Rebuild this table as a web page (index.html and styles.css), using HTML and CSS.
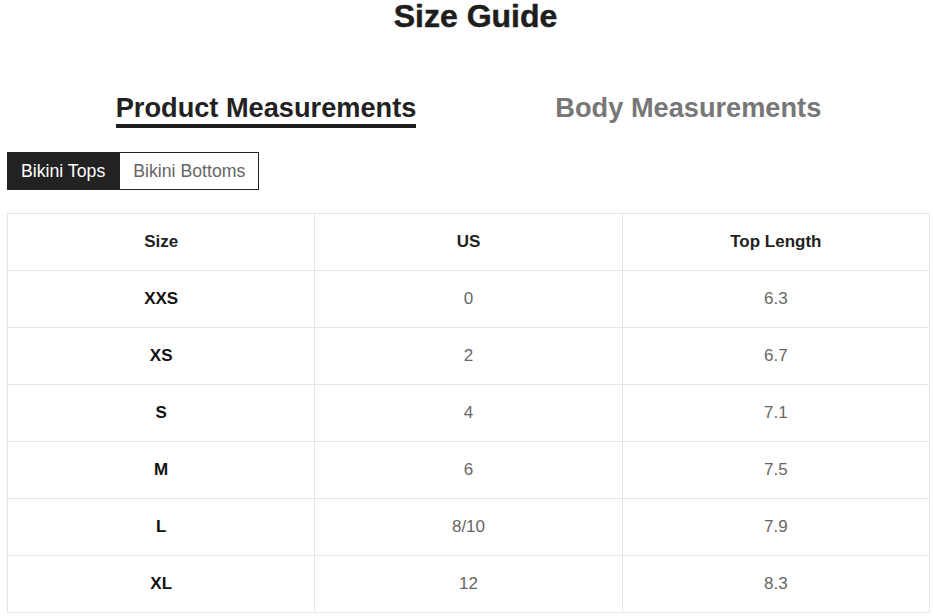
FILE: index.html
```html
<!DOCTYPE html>
<html>
<head>
<meta charset="utf-8">
<link rel="stylesheet" href="styles.css">
</head>
<body>
<div class="page">
  <h1 class="title">Size Guide</h1>
  <div class="tabs">
    <div class="tab active">Product Measurements</div>
    <div class="tab">Body Measurements</div>
  </div>
  <div class="toggle">
    <button class="btn on">Bikini Tops</button><button class="btn">Bikini Bottoms</button>
  </div>
  <table class="chart">
    <thead>
      <tr><th>Size</th><th>US</th><th>Top Length</th></tr>
    </thead>
    <tbody>
      <tr><td class="sz">XXS</td><td>0</td><td>6.3</td></tr>
      <tr><td class="sz">XS</td><td>2</td><td>6.7</td></tr>
      <tr><td class="sz">S</td><td>4</td><td>7.1</td></tr>
      <tr><td class="sz">M</td><td>6</td><td>7.5</td></tr>
      <tr><td class="sz">L</td><td>8/10</td><td>7.9</td></tr>
      <tr><td class="sz">XL</td><td>12</td><td>8.3</td></tr>
    </tbody>
  </table>
</div>
</body>
</html>
```
FILE: styles.css
```css
html, body {
  margin: 0;
  padding: 0;
  background: #fff;
}
body {
  font-family: "Liberation Sans", Arial, sans-serif;
  color: #222;
}
.page {
  padding: 0 4px 0 7px;
  width: 923px;
}
.title {
  margin: 0;
  font-size: 32px;
  line-height: 32px;
  height: 30px;
  font-weight: bold;
  text-align: center;
  padding-left: 14px;
  color: #1e1e1e;
  -webkit-text-stroke: 0.5px #1e1e1e;
}
.tabs {
  display: flex;
  justify-content: center;
  gap: 139px;
  margin-top: 62px;
}
.tab {
  font-size: 27.2px;
  line-height: 32px;
  font-weight: bold;
  color: #777;
  border-bottom: 4px solid transparent;
}
.tab.active {
  color: #222;
  border-bottom-color: #1e1e1e;
}
.toggle {
  display: flex;
  margin-top: 24px;
}
.btn {
  font-family: "Liberation Sans", Arial, sans-serif;
  font-size: 17.7px;
  line-height: 36px;
  height: 38px;
  padding: 0 13px;
  margin: 0;
  border: 1px solid #222;
  background: #fff;
  color: #666;
  border-radius: 0;
}
.btn.on {
  background: #222;
  color: #fff;
}
.chart {
  margin-top: 23px;
  width: 923px;
  border-collapse: collapse;
  table-layout: fixed;
  font-size: 17px;
}
.chart th, .chart td {
  border: 1px solid #e6e6e6;
  height: 56px;
  padding: 0;
  text-align: center;
  vertical-align: middle;
}
.chart th {
  font-weight: bold;
  color: #222;
}
.chart td {
  color: #666;
}
.chart td.sz {
  font-weight: bold;
  color: #111;
}
```
